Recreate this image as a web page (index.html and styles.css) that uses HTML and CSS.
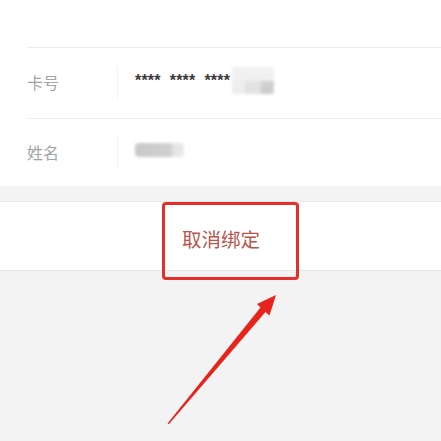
FILE: index.html
```html
<!DOCTYPE html>
<html lang="zh-CN">
<head>
<meta charset="utf-8">
<link rel="stylesheet" href="styles.css">
</head>
<body>
<div class="page">
  <section class="card">
    <div class="row row-card">
      <div class="label">卡号</div>
      <div class="value">
        <span class="stars">****</span><span class="stars">****</span><span class="stars">****</span>
        <span class="blur blur-card"></span>
      </div>
    </div>
    <div class="row row-name">
      <div class="label">姓名</div>
      <div class="value">
        <span class="blur blur-name"></span>
      </div>
    </div>
  </section>
  <div class="gap"></div>
  <section class="action">
    <span class="unbind">取消绑定</span>
  </section>
  <div class="highlight"></div>
  <svg class="arrow" width="441" height="441" viewBox="0 0 441 441">
    <polygon points="167.5,423.5 260.5,307.5 257,304 276,295 269.5,315.5 265.5,312 169,424" fill="#e8231c"/>
  </svg>
</div>
</body>
</html>
```

FILE: styles.css
```css
html, body {
  margin: 0;
  padding: 0;
  background: #f3f3f3;
}
body {
  font-family: "Noto Sans CJK SC", "Noto Sans", sans-serif;
  width: 441px;
  height: 441px;
  overflow: hidden;
}
.page {
  position: relative;
  height: 441px;
}
.card {
  background: #fff;
  padding-top: 47px;
}
.row {
  margin-left: 27px;
  border-top: 1px solid #ededed;
  display: flex;
  align-items: center;
}
.row-card {
  height: 70px;
}
.row-name {
  height: 67px;
}
.label {
  width: 90px;
  font-size: 16px;
  color: #a3a3a3;
  line-height: 20px;
  margin-top: -2px;
}
.value {
  display: flex;
  align-items: center;
  height: 32px;
  border-left: 1px solid #f2f2f2;
  padding-left: 17px;
  flex: 1;
}
.stars {
  font-family: "Liberation Sans", sans-serif;
  font-size: 16px;
  font-weight: bold;
  color: #3a3a3a;
  margin-right: 9px;
  position: relative;
  top: -2px;
  letter-spacing: 0.2px;
}
.stars:nth-child(3) { margin-right: 2px; }
.blur {
  display: block;
  filter: blur(1.5px);
}
.blur-card {
  width: 42px;
  height: 27px;
  margin-top: -6px;
  background:
    linear-gradient(#d2d2d2, #cbcbcb) right bottom / 13px 13px no-repeat,
    linear-gradient(#e2e2e2, #e2e2e2) 13px bottom / 16px 13px no-repeat,
    linear-gradient(#f2f2f2, #ececec);
  border-radius: 3px;
}
.blur-name {
  width: 49px;
  height: 14px;
  margin-top: -6px;
  background:
    linear-gradient(90deg, #c9c9c9, #d0d0d0 75%, #e4e4e4 75%, #e9e9e9);
  border-radius: 4px;
}
.gap {
  height: 15px;
  background: #f4f4f4;
  border-bottom: 1px solid #e9e9e9;
}
.action {
  background: #fff;
  height: 68px;
  border-bottom: 1px solid #e6e6e6;
  display: flex;
  justify-content: center;
  align-items: center;
}
.unbind {
  font-size: 19.5px;
  color: #b9554c;
  margin-top: 4px;
  margin-left: 1px;
}
.highlight {
  position: absolute;
  left: 162px;
  top: 202px;
  width: 131px;
  height: 72px;
  border: 3px solid #e5302a;
  border-radius: 4px;
}
.arrow {
  position: absolute;
  left: 0;
  top: 0;
  pointer-events: none;
}
```
